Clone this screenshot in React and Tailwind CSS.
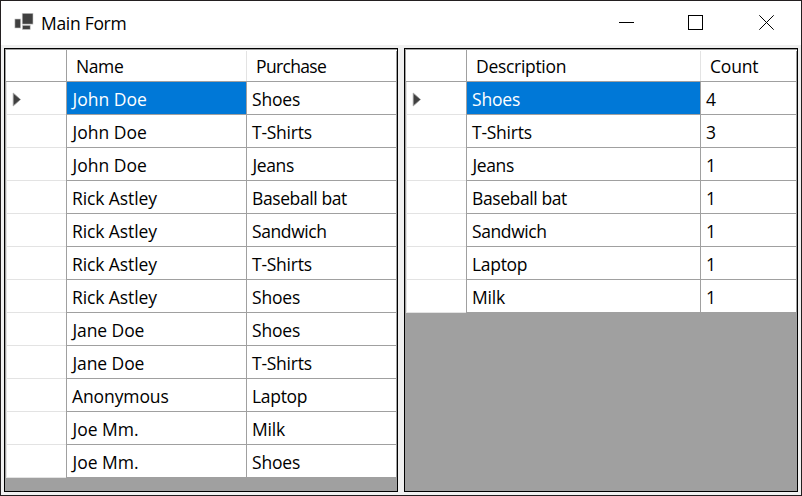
const purchases = [
  ['John Doe', 'Shoes'],
  ['John Doe', 'T-Shirts'],
  ['John Doe', 'Jeans'],
  ['Rick Astley', 'Baseball bat'],
  ['Rick Astley', 'Sandwich'],
  ['Rick Astley', 'T-Shirts'],
  ['Rick Astley', 'Shoes'],
  ['Jane Doe', 'Shoes'],
  ['Jane Doe', 'T-Shirts'],
  ['Anonymous', 'Laptop'],
  ['Joe Mm.', 'Milk'],
  ['Joe Mm.', 'Shoes'],
];

const totals = [
  ['Shoes', '4'],
  ['T-Shirts', '3'],
  ['Jeans', '1'],
  ['Baseball bat', '1'],
  ['Sandwich', '1'],
  ['Laptop', '1'],
  ['Milk', '1'],
];

const tracking = {
  'John Doe': 'pl-[0.5px] tracking-[0px]',
  'Jane Doe': 'pl-[0.5px] tracking-[-0.1px]',
  'Joe Mm.': 'pl-[0.5px] tracking-[0px]',
  Jeans: 'pl-[0.5px] tracking-[-0.4px]',
  'Rick Astley': 'tracking-[-0.1px]',
  Anonymous: 'tracking-[-0.1px]',
  Purchase: 'tracking-[-0.65px]',
  Shoes: 'tracking-[-0.2px]',
  'T-Shirts': 'tracking-[-0.25px]',
  Description: 'tracking-[-0.3px]',
  Count: 'tracking-[-0.2px]',
  Milk: 'tracking-[-0.2px]',
  Laptop: 'tracking-[-0.3px]',
};

function Label({ text }) {
  return <span className={tracking[text] ?? ''}>{text}</span>;
}

function Pointer() {
  return (
    <svg className="ml-[4px] block" width="12" height="16" viewBox="0 0 12 16">
      <path d="M2.2 2 L9.6 8.5 L2.2 15 Z" fill="#404040" stroke="#a8a8a8" strokeWidth="0.8" />
    </svg>
  );
}

function Grid({ headers, rows, cols }) {
  return (
    <section className="flex flex-1 flex-col border border-black bg-[#a0a0a0] pt-px pl-px">
      <div className={`grid h-8 ${cols}`}>
        <div className="border-r border-b border-[#a0a0a0] bg-white" />
        {headers.map((h, i) => (
          <div key={h} className="flex items-center border-b border-[#a0a0a0] bg-white pl-[9px]">
            <div className="flex-1">
              <Label text={h} />
            </div>
            <span className={`h-[30px] w-px self-end ${i === 0 ? 'bg-[#e3e3e3]' : 'bg-[#a0a0a0]'}`} />
          </div>
        ))}
      </div>
      {rows.map(([a, b], i) => (
        <div key={i} className={`grid h-[33px] ${cols}`}>
          <div className="flex items-center border-r border-[#a0a0a0] border-l border-l-[#e3e3e3] bg-white shadow-[inset_0_-1px_0_#e3e3e3]">
            {i === 0 && <Pointer />}
          </div>
          <div
            className={`flex items-center border-r border-b border-[#a0a0a0] pt-[2px] pl-[5px] ${
              i === 0 ? 'bg-[#0078d7] text-white' : 'bg-white'
            }`}
          >
            <Label text={a} />
          </div>
          <div className="flex items-center border-r border-b border-[#a0a0a0] bg-white pt-[2px] pl-[5px]">
            <Label text={b} />
          </div>
        </div>
      ))}
    </section>
  );
}

export default function App() {
  return (
    <div className="flex h-[496px] w-[802px] flex-col border border-[#231f20] bg-[#f0f0f0] font-['Open_Sans','Noto_Sans',sans-serif] text-[17.5px] leading-6 tracking-[-0.4px] whitespace-nowrap text-black">
      <header className="flex h-11 items-center bg-white">
        <svg className="ml-[12px] block" width="22" height="20" viewBox="0 0 22 20">
          <g fill="#404040" stroke="#c8c8c8" strokeWidth="0.6">
            <rect x="9.2" y="0.3" width="10.8" height="10.8" />
            <rect x="1.9" y="6" width="5.8" height="9" />
            <rect x="9.4" y="12.3" width="7.8" height="4.2" />
          </g>
        </svg>
        <h1 className="ml-[6px] flex-1 tracking-[-0.3px]">Main Form</h1>
        <svg className="block h-11 w-[207px]" viewBox="594 1 207 44" fill="none" stroke="#000" strokeWidth="1">
          <path d="M619 22.5H634" shapeRendering="crispEdges" />
          <rect x="688.5" y="15.5" width="14" height="14" shapeRendering="crispEdges" />
          <path d="M759.3 15.3L773.7 29.7M773.7 15.3L759.3 29.7" />
        </svg>
      </header>
      <main className="flex flex-1 gap-1.5 px-[3px] pt-[3px] pb-[3px]">
        <Grid headers={['Name', 'Purchase']} rows={purchases} cols="grid-cols-[61px_180px_150px]" />
        <Grid headers={['Description', 'Count']} rows={totals} cols="grid-cols-[61px_234px_96px]" />
      </main>
    </div>
  );
}
